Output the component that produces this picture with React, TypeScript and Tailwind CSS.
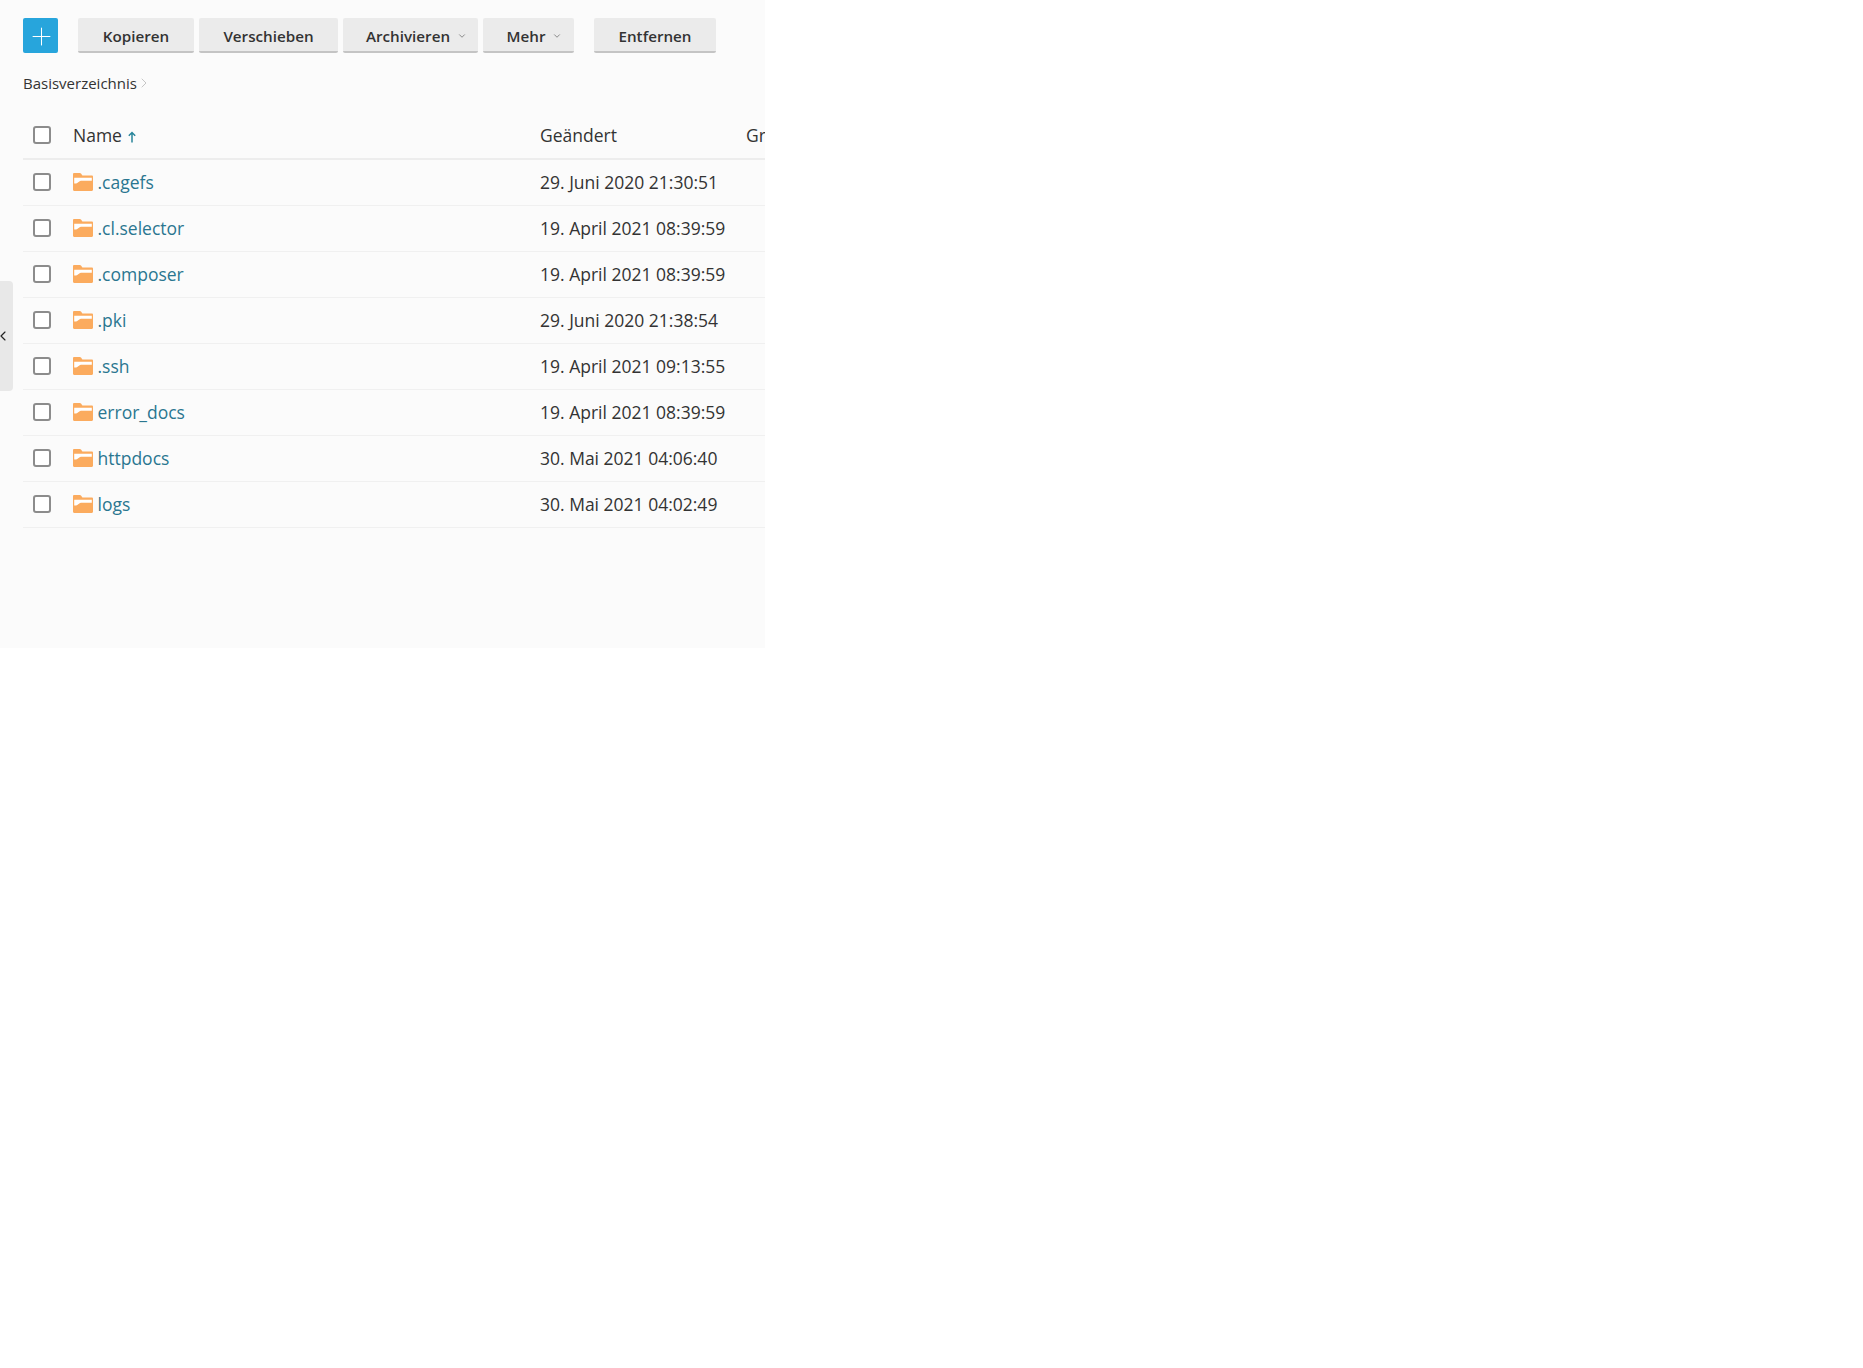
import React from "react";
import { ChevronDown, ChevronLeft, ChevronRight, Plus } from "lucide-react";

const rows = [
  { name: ".cagefs", date: "29. Juni 2020 21:30:51" },
  { name: ".cl.selector", date: "19. April 2021 08:39:59" },
  { name: ".composer", date: "19. April 2021 08:39:59" },
  { name: ".pki", date: "29. Juni 2020 21:38:54" },
  { name: ".ssh", date: "19. April 2021 09:13:55" },
  { name: "error_docs", date: "19. April 2021 08:39:59" },
  { name: "httpdocs", date: "30. Mai 2021 04:06:40" },
  { name: "logs", date: "30. Mai 2021 04:02:49" },
];

const Checkbox: React.FC = () => (
  <span className="ml-[10px] mr-[22px] block h-[18px] w-[18px] shrink-0 rounded-[3px] border-2 border-[#8c8c8c] bg-white" />
);

const FolderIcon: React.FC = () => (
  <svg viewBox="0 0 20 18" className="mr-[4.5px] h-[18px] w-[20px] shrink-0">
    <path d="M0 1.2C0 .5.5 0 1.2 0h5.6c.5 0 .9.2 1.2.6L9.4 2.4h9.4c.7 0 1.2.5 1.2 1.2v13.2c0 .7-.5 1.2-1.2 1.2H1.2C.5 18 0 17.500 0 16.800z" fill="#fbab5e" />
    <path d="M1.200 4.800h17.600v3H8c-.7 0-1.200.2-1.700.6L4.200 10c-.5.400-1.300.6-3 .6z" fill="#fff" />
  </svg>
);

const ToolButton: React.FC<{ label: string; width: string; menu?: boolean }> = ({ label, width, menu }) => (
  <button
    className={`flex h-[35px] items-center justify-center rounded-[2px] border-b-2 border-[#c4c4c4] bg-[#ebebeb] pt-[3px] text-[15.2px] font-semibold text-[#333] ${menu ? "pl-[12px]" : ""} ${width}`}
  >
    {label}
    {menu && <ChevronDown className="ml-[7px] h-[10px] w-[10px] text-[#777]" strokeWidth={2} />}
  </button>
);

export default function App() {
  return (
    <div className="min-h-[1368px] bg-white font-['Open_Sans',sans-serif] text-[#333]">
      <div className="relative h-[648px] w-[765px] overflow-hidden bg-[#fbfbfb] pl-[23px] pt-[18px]">
        <div className="flex items-start">
          <button className="flex h-[35px] w-[35px] items-center justify-center rounded-[2px] bg-[#27a5dc] pl-[2px] pt-[2px] text-white">
            <Plus className="h-[29px] w-[29px]" strokeWidth={0.85} />
          </button>
          <div className="ml-[20px] flex gap-[5px]">
            <ToolButton label="Kopieren" width="w-[116px]" />
            <ToolButton label="Verschieben" width="w-[139px]" />
            <ToolButton label="Archivieren" width="w-[135px]" menu />
            <ToolButton label="Mehr" width="w-[91px]" menu />
          </div>
          <div className="ml-[20px]">
            <ToolButton label="Entfernen" width="w-[122px]" />
          </div>
        </div>

        <div className="mt-[20px] flex h-[20px] items-center text-[15px]">
          Basisverzeichnis
          <ChevronRight className="-ml-[1px] h-[16px] w-[16px] text-[#bbb]" strokeWidth={1.25} />
        </div>

        <div className="mt-[21px] flex h-[46px] w-[742px] items-center overflow-hidden border-b-2 border-[#ededed] pb-[2px] text-[17.5px]">
          <Checkbox />
          <div className="flex w-[467px] shrink-0 items-center">
            Name
            <svg viewBox="0 0 10 12" className="ml-[5px] mt-[3px] h-[12px] w-[10px] text-[#28859b]">
              <path d="M5 11.500V1.500M1.800 4.700 5 1.500l3.200 3.200" fill="none" stroke="currentColor" strokeWidth="1.500" />
            </svg>
          </div>
          <div className="w-[206px] shrink-0">Geändert</div>
          <div className="shrink-0">Größe</div>
        </div>

        {rows.map((row) => (
          <div key={row.name} className="flex h-[46px] w-[742px] items-center border-b border-[#f0f0f0] pb-[1px] text-[17.5px]">
            <Checkbox />
            <div className="flex w-[467px] shrink-0 items-center text-[#2a7690]">
              <FolderIcon />
              {row.name}
            </div>
            <div className="whitespace-nowrap">{row.date}</div>
          </div>
        ))}

        <div className="absolute left-0 top-[281px] flex h-[110px] w-[13px] items-center rounded-r-[4px] bg-[#e8e8e8]">
          <ChevronLeft className="-ml-[5px] h-[16px] w-[16px] text-[#222]" strokeWidth={1.75} />
        </div>
      </div>
    </div>
  );
}
